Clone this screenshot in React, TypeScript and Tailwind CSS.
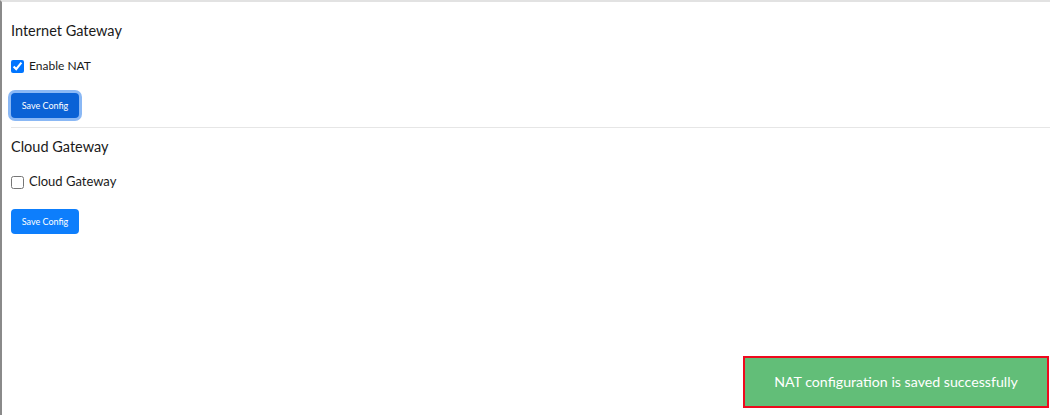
import React from 'react';

export default function App() {
  return (
    <div className="relative h-[415px] w-[1050px] overflow-hidden border-l-2 border-t-2 border-l-[#8a8a8a] border-t-[#e2e2e2] bg-white font-['Lato','Noto_Sans',sans-serif] text-[#1a1a1a]">
      {/* Internet Gateway */}
      <section className="px-[9px] pt-[19px]">
        <h2 className="text-[14.5px] leading-[20px]">Internet Gateway</h2>
        <label className="mt-[17px] flex h-[16px] items-center gap-[5px] text-[12px]">
          <input type="checkbox" defaultChecked className="m-0 h-[13px] w-[13px]" />
          Enable NAT
        </label>
        <button className="mt-[19px] h-[25px] w-[68px] rounded-[4px] bg-[#0a62d6] text-[9px] text-white shadow-[0_0_0_3px_#8ab8f5]">
          Save Config
        </button>
      </section>

      <div className="ml-[9px] mt-[9px] h-px bg-[#e6e6e6]" />

      {/* Cloud Gateway */}
      <section className="px-[9px] pt-[9px]">
        <h2 className="text-[14.5px] leading-[20px]">Cloud Gateway</h2>
        <label className="mt-[17px] flex h-[16px] items-center gap-[5px] text-[13px]">
          <input type="checkbox" className="m-0 h-[13px] w-[13px]" />
          Cloud Gateway
        </label>
        <button className="mt-[19px] h-[25px] w-[68px] rounded-[4px] bg-[#0d7efc] text-[9px] text-white">
          Save Config
        </button>
      </section>

      {/* Toast */}
      <div className="absolute bottom-[7px] right-px flex h-[52px] w-[306px] items-center justify-center border-2 border-[#ee0a1e] bg-[#62be78] text-[14.2px] text-white">
        NAT configuration is saved successfully
      </div>
    </div>
  );
}
